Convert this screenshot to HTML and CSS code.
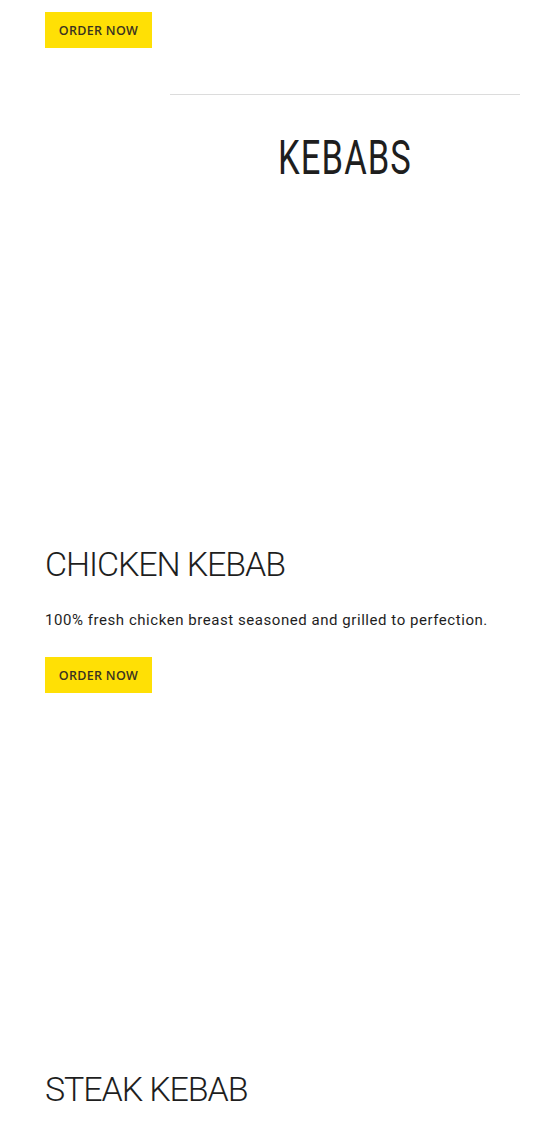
FILE: index.html
```html
<!DOCTYPE html>
<html>
<head>
<meta charset="utf-8">
<link rel="stylesheet" href="styles.css">
</head>
<body>
<div class="page">
  <div class="top-action">
    <a class="btn">ORDER NOW</a>
  </div>
  <section class="category">
    <div class="rule"></div>
    <h2 class="category-title">KEBABS</h2>
  </section>
  <div class="item">
    <div class="item-image"></div>
    <h3 class="item-title">CHICKEN KEBAB</h3>
    <p class="item-desc">100% fresh chicken breast seasoned and grilled to perfection.</p>
    <a class="btn">ORDER NOW</a>
  </div>
  <div class="item">
    <div class="item-image"></div>
    <h3 class="item-title">STEAK KEBAB</h3>
  </div>
</div>
</body>
</html>
```
FILE: styles.css
```css
html, body {
  margin: 0;
  padding: 0;
  background: #fff;
}
.page {
  padding: 12px 30px 0 45px;
  font-family: Roboto, "Liberation Sans", sans-serif;
  color: #1e1e1e;
}
.btn {
  display: inline-flex;
  align-items: center;
  justify-content: center;
  width: 107px;
  height: 36px;
  background: #ffe005;
  color: #3a3320;
  font-family: "Open Sans", sans-serif;
  font-size: 12.5px;
  font-weight: 600;
  letter-spacing: 0.3px;
  text-decoration: none;
  box-sizing: border-box;
}
.category {
  margin-left: 125px;
  margin-top: 46px;
}
.rule {
  height: 1px;
  background: #dcdcdc;
}
.category-title {
  margin: 34px 0 0;
  text-align: center;
  font-weight: 400;
  font-size: 48px;
  line-height: 58px;
  letter-spacing: 1.5px;
  transform: scaleX(0.72);
}
.item-image {
  height: 356px;
}
.item-title {
  margin: 0;
  font-weight: 300;
  font-size: 34px;
  line-height: 42px;
  letter-spacing: -1.1px;
}
.item-desc {
  margin: 25px 0 0;
  font-size: 15px;
  line-height: 20px;
  letter-spacing: 0.55px;
}
.item .btn {
  margin-top: 27px;
}
.item + .item .item-image {
  height: 375px;
}
```
